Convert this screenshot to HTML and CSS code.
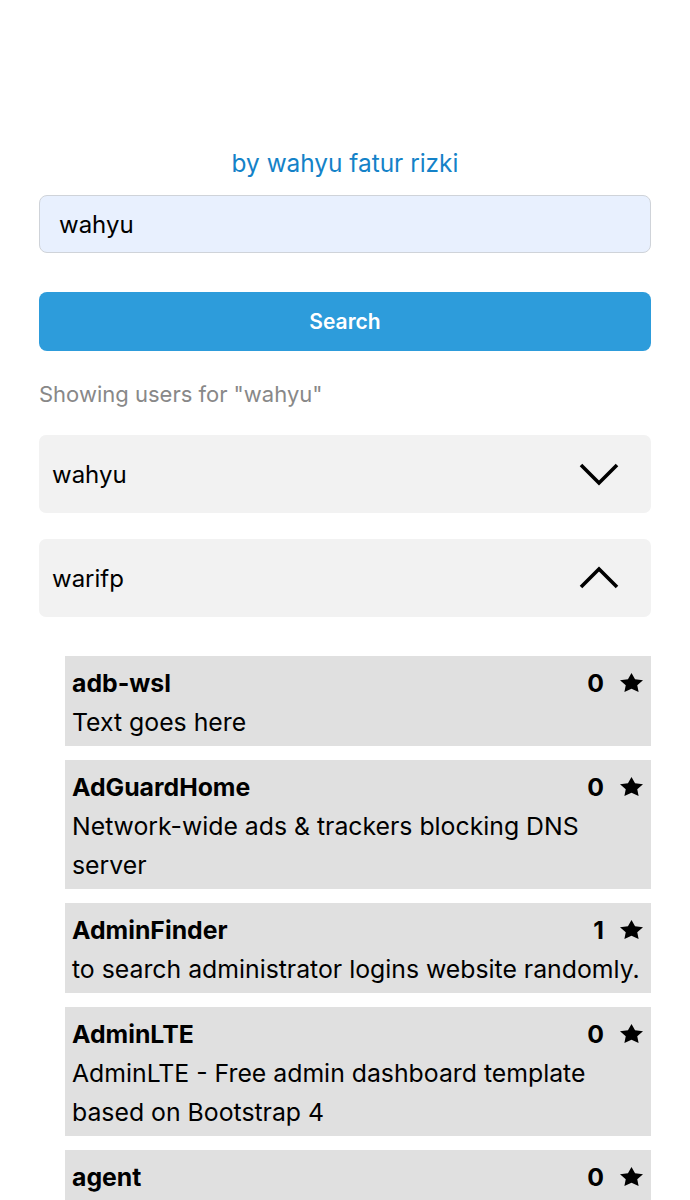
FILE: index.html
```html
<!DOCTYPE html>
<html>
<head>
<meta charset="utf-8">
<link rel="stylesheet" href="styles.css">
</head>
<body>
<div class="page">
  <p class="author">by wahyu fatur rizki</p>
  <input class="search-input" type="text" value="wahyu">
  <button class="search-btn">Search</button>
  <p class="showing">Showing users for "wahyu"</p>
  <div class="user">
    <span class="user-name">wahyu</span>
    <svg class="chev" width="40" height="25" viewBox="0 0 40 25"><path d="M2 3 L20 21 L38 3" fill="none" stroke="#000" stroke-width="3.6"/></svg>
  </div>
  <div class="user">
    <span class="user-name">warifp</span>
    <svg class="chev" width="40" height="25" viewBox="0 0 40 25"><path d="M2 21 L20 3 L38 21" fill="none" stroke="#000" stroke-width="3.6"/></svg>
  </div>
  <div class="repos">
    <div class="repo">
      <div class="repo-head"><span class="repo-name">adb-wsl</span><span class="stars">0<svg class="star" width="23" height="19" viewBox="0 0 95.1 90.45" preserveAspectRatio="none"><polygon points="47.55,0 62.25,29.75 95.1,34.55 71.35,57.75 76.95,90.45 47.55,75 18.15,90.45 23.75,57.75 0,34.55 32.85,29.75"/></svg></span></div>
      <div class="repo-desc">Text goes here</div>
    </div>
    <div class="repo">
      <div class="repo-head"><span class="repo-name">AdGuardHome</span><span class="stars">0<svg class="star" width="23" height="19" viewBox="0 0 95.1 90.45" preserveAspectRatio="none"><polygon points="47.55,0 62.25,29.75 95.1,34.55 71.35,57.75 76.95,90.45 47.55,75 18.15,90.45 23.75,57.75 0,34.55 32.85,29.75"/></svg></span></div>
      <div class="repo-desc">Network-wide ads &amp; trackers blocking DNS server</div>
    </div>
    <div class="repo">
      <div class="repo-head"><span class="repo-name">AdminFinder</span><span class="stars">1<svg class="star" width="23" height="19" viewBox="0 0 95.1 90.45" preserveAspectRatio="none"><polygon points="47.55,0 62.25,29.75 95.1,34.55 71.35,57.75 76.95,90.45 47.55,75 18.15,90.45 23.75,57.75 0,34.55 32.85,29.75"/></svg></span></div>
      <div class="repo-desc">to search administrator logins website randomly.</div>
    </div>
    <div class="repo">
      <div class="repo-head"><span class="repo-name">AdminLTE</span><span class="stars">0<svg class="star" width="23" height="19" viewBox="0 0 95.1 90.45" preserveAspectRatio="none"><polygon points="47.55,0 62.25,29.75 95.1,34.55 71.35,57.75 76.95,90.45 47.55,75 18.15,90.45 23.75,57.75 0,34.55 32.85,29.75"/></svg></span></div>
      <div class="repo-desc">AdminLTE - Free admin dashboard template based on Bootstrap 4</div>
    </div>
    <div class="repo">
      <div class="repo-head"><span class="repo-name">agent</span><span class="stars">0<svg class="star" width="23" height="19" viewBox="0 0 95.1 90.45" preserveAspectRatio="none"><polygon points="47.55,0 62.25,29.75 95.1,34.55 71.35,57.75 76.95,90.45 47.55,75 18.15,90.45 23.75,57.75 0,34.55 32.85,29.75"/></svg></span></div>
    </div>
  </div>
</div>
</body>
</html>
```
FILE: styles.css
```css
html, body {
  margin: 0;
  padding: 0;
  background: #fff;
}
body {
  font-family: Inter, "Liberation Sans", sans-serif;
  color: #000;
}
.page {
  padding: 143px 39px 0 39px;
  display: flex;
  flex-direction: column;
}
.author {
  margin: 0;
  text-align: center;
  color: #1482c8;
  font-size: 24.4px;
  line-height: 40px;
}
.search-input {
  margin-top: 12px;
  height: 58px;
  box-sizing: border-box;
  border: 1px solid #cfd3d9;
  border-radius: 8px;
  background: #e8f0fe;
  font-family: inherit;
  font-size: 24px;
  padding: 0 19px;
  color: #000;
  outline: none;
}
.search-btn {
  margin-top: 39px;
  height: 59px;
  border: none;
  border-radius: 8px;
  background: #2d9cdb;
  color: #fff;
  font-family: inherit;
  font-size: 21px;
  font-weight: 600;
}
.showing {
  margin: 28px 0 0 0;
  color: #888;
  font-size: 22px;
  line-height: 30px;
}
.user {
  margin-top: 26px;
  height: 78px;
  background: #f2f2f2;
  border-radius: 7px;
  display: flex;
  align-items: center;
  justify-content: space-between;
  padding: 0 32px 0 13px;
}
.user + .user {
  margin-top: 26px;
}
.user-name {
  font-size: 24px;
}
.repos {
  margin: 39px 0 0 26px;
  display: flex;
  flex-direction: column;
  gap: 14px;
}
.repo {
  background: #e0e0e0;
  padding: 8px 8px 4px 7px;
  font-size: 24.8px;
  line-height: 39px;
}
.repo-head {
  display: flex;
  justify-content: space-between;
  align-items: center;
}
.repo-name {
  font-weight: 700;
}
.stars {
  font-weight: 700;
  display: flex;
  align-items: center;
  gap: 16px;
}
.star {
  display: block;
  fill: #000;
  margin-top: -2px;
}
```
